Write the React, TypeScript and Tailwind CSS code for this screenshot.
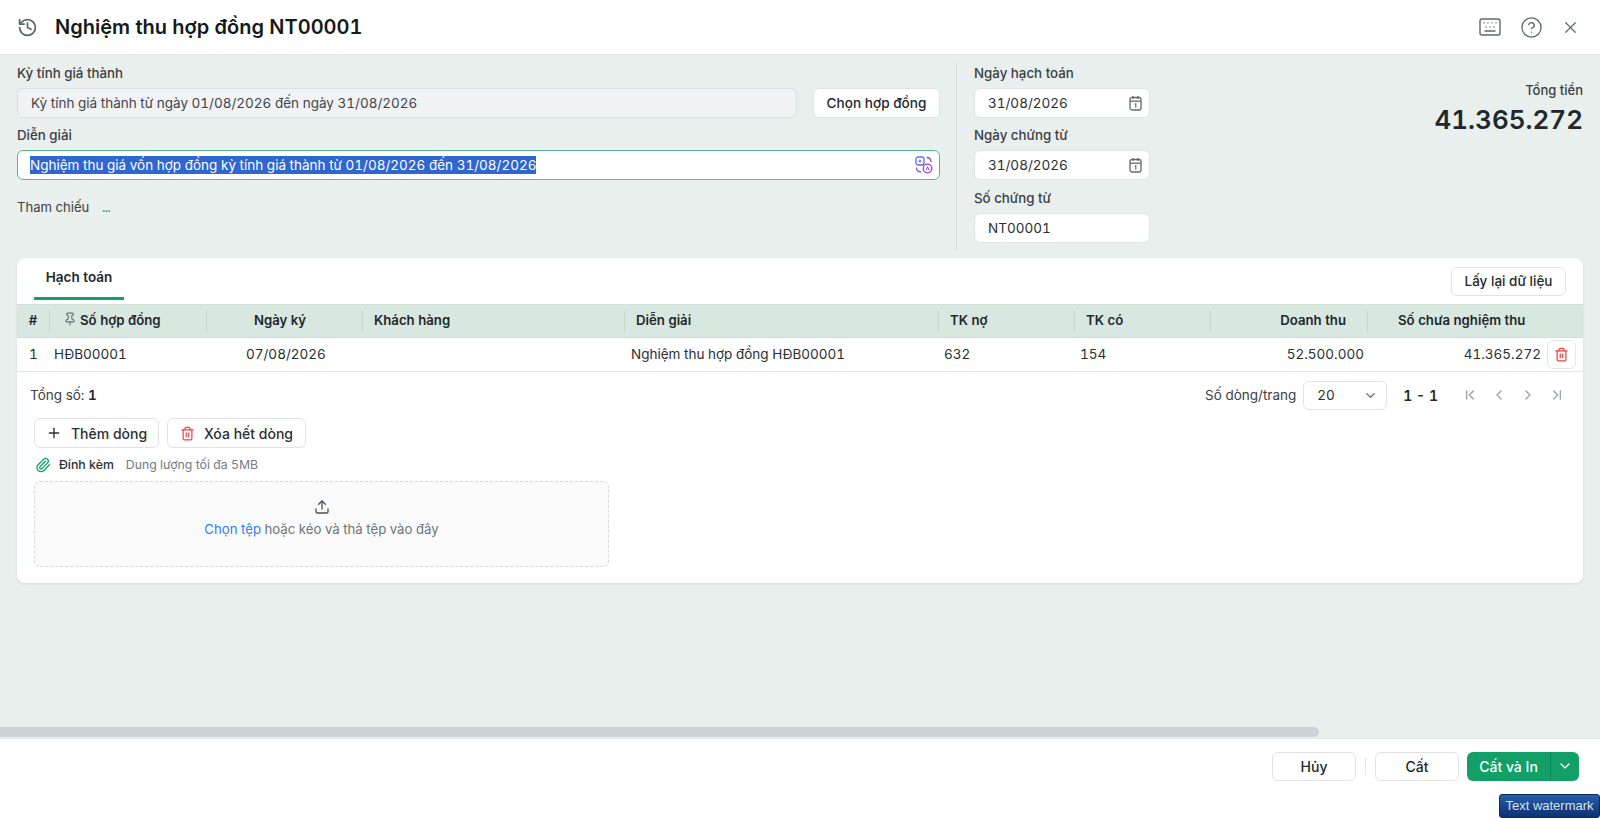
import {
  ChevronDown,
  ChevronFirst,
  ChevronLast,
  ChevronLeft,
  ChevronRight,
  CircleHelp,
  History,
  Keyboard,
  Paperclip,
  Pin,
  Plus,
  Trash2,
  Upload,
  X,
} from "lucide-react";

const font = { fontFamily: "Inter, 'Noto Sans', sans-serif" };

const CalendarIcon = () => (
  <svg width="15" height="16" viewBox="0 0 15 16" fill="none" className="text-[#5f6b73]">
    <rect x="2" y="2.5" width="11" height="12.5" rx="2" stroke="currentColor" strokeWidth="1.3" />
    <path d="M2 6.2h11" stroke="currentColor" strokeWidth="1.3" />
    <path d="M5 1v3M10 1v3" stroke="currentColor" strokeWidth="1.3" />
    <path d="M6.8 9.3l1-.6v4" stroke="currentColor" strokeWidth="1.1" />
  </svg>
);

const DateField = ({ value }: { value: string }) => (
  <div className="flex h-[30px] w-[176px] items-center justify-between rounded-md border border-[#dfe3e6] bg-white pl-[13px] pr-[6px] text-[13.5px] text-[#2a2f33]">
    <span>{value}</span>
    <CalendarIcon />
  </div>
);

const Label = ({ text }: { text: string }) => (
  <div className="flex h-[18px] items-center text-[13.3px] font-medium text-[#3a4045]">{text}</div>
);

const TranslateIcon = () => (
  <svg width="18" height="18" viewBox="0 0 18 18" fill="none">
    <defs>
      <linearGradient id="tg" x1="0" y1="0" x2="18" y2="18" gradientUnits="userSpaceOnUse">
        <stop offset="0" stopColor="#3b82f6" />
        <stop offset="1" stopColor="#c026d3" />
      </linearGradient>
    </defs>
    <rect x="1" y="1" width="8" height="8" rx="2" stroke="url(#tg)" strokeWidth="1.3" />
    <path d="M3.5 5h3M5 3.5v3" stroke="url(#tg)" strokeWidth="1.1" />
    <circle cx="12.5" cy="12.5" r="4.3" stroke="url(#tg)" strokeWidth="1.3" />
    <path d="M11 14.3l1.5-3.6 1.5 3.6" stroke="url(#tg)" strokeWidth="1" />
    <path d="M11.5 1.5c2.5 0 4.5 1.5 4.5 4.5M1.5 11.5c0 2.5 1.5 4.5 4.5 4.5" stroke="url(#tg)" strokeWidth="1.3" />
  </svg>
);

const headCell = "flex h-[22px] items-center border-r border-[#c9d6d0] text-[13.2px] font-semibold text-[#23282c]";
const gridCols = "grid grid-cols-[33px_157px_156px_262px_314px_136px_136px_157px_216px]";

export default function App() {
  return (
    <div className="flex h-[818px] w-[1600px] flex-col overflow-hidden bg-white tabular-nums" style={font}>
      <div className="flex h-[794px] flex-col overflow-hidden rounded-lg bg-white">
        <header className="flex h-[55px] shrink-0 items-center justify-between border-b border-[#e4e8e8] pl-[17px] pr-[20px]">
          <div className="flex items-center gap-[17px]">
            <History size={21} className="text-[#5d666c]" />
            <h1 className="text-[20px] font-semibold text-[#16191c]">Nghiệm thu hợp đồng NT00001</h1>
          </div>
          <div className="flex items-center gap-[18px] text-[#60696f]">
            <Keyboard size={24} strokeWidth={1.4} />
            <CircleHelp size={23} strokeWidth={1.4} />
            <X size={19} strokeWidth={1.5} />
          </div>
        </header>

        <main className="flex min-h-0 flex-1 flex-col bg-[#e9efed]">
          <section className="flex pl-[17px] pr-[17px] pt-[8px]">
            <div className="w-[923px] pt-[2px]">
              <Label text="Kỳ tính giá thành" />
              <div className="mt-[5px] flex gap-[16px]">
                <div className="flex h-[30px] w-[780px] items-center rounded-md border border-[#dcdfe2] bg-[#f1f2f4] px-[13px] text-[13.5px] text-[#3f464b]">
                  Kỳ tính giá thành từ ngày 01/08/2026 đến ngày 31/08/2026
                </div>
                <button className="h-[30px] w-[127px] rounded-md border border-[#dfe3e6] bg-white text-[13.6px] font-medium text-[#23282c]">
                  Chọn hợp đồng
                </button>
              </div>
              <div className="mt-[9px]">
                <Label text="Diễn giải" />
              </div>
              <div className="mt-[5px] flex h-[30px] items-center justify-between rounded-md border border-[#5cb592] bg-white pl-[12px] pr-[6px] text-[13.5px]">
                <span className="bg-[#2f66d0] leading-[18px] text-white">
                  Nghiệm thu giá vốn hợp đồng kỳ tính giá thành từ 01/08/2026 đến 31/08/2026
                </span>
                <TranslateIcon />
              </div>
              <div className="mt-[18px] flex items-center gap-[13px] text-[13.1px] text-[#3a4045]">
                <span>Tham chiếu</span>
                <span className="text-[10px] font-bold leading-none text-[#12a066]">...</span>
              </div>
            </div>

            <div className="ml-[16px] h-[187px] w-px bg-[#d5dbd9]" />

            <div className="ml-[17px] w-[176px] pt-[2px]">
              <Label text="Ngày hạch toán" />
              <div className="mt-[5px]">
                <DateField value="31/08/2026" />
              </div>
              <div className="mt-[9px]">
                <Label text="Ngày chứng từ" />
              </div>
              <div className="mt-[5px]">
                <DateField value="31/08/2026" />
              </div>
              <div className="mt-[10px]">
                <Label text="Số chứng từ" />
              </div>
              <div className="mt-[5px] flex h-[30px] items-center rounded-md border border-[#dfe3e6] bg-white pl-[13px] text-[13.5px] text-[#2a2f33]">
                NT00001
              </div>
            </div>

            <div className="flex-1 pt-[18px] text-right">
              <div className="text-[13px] font-medium text-[#3a4045]">Tổng tiền</div>
              <div className="mt-[3px] text-[26px] font-semibold leading-[32px] text-[#22272b]">41.365.272</div>
            </div>
          </section>

          <section className="mx-[17px] mt-[8px] h-[325px] overflow-hidden rounded-lg bg-white shadow-[0_1px_3px_rgba(0,0,0,0.08)]">
            <div className="flex h-[46px] items-start justify-between pl-[17px] pr-[17px]">
              <div className="flex h-[42px] w-[90px] items-center justify-center border-b-[3px] border-[#12a066] text-[13.5px] font-semibold text-[#23282c]">
                Hạch toán
              </div>
              <button className="mt-[9px] h-[29px] w-[115px] rounded-md border border-[#dfe3e6] bg-white text-[13.5px] font-medium text-[#23282c]">
                Lấy lại dữ liệu
              </button>
            </div>

            <div className={`${gridCols} h-[34px] items-center border-y border-[#d2dfd9] bg-[#d9e7e1]`}>
              <div className={`${headCell} justify-center`}>#</div>
              <div className={`${headCell} pl-[13px]`}>
                <Pin size={14} className="mr-[3px] -translate-y-[2px] text-[#6b7378]" />
                Số hợp đồng
              </div>
              <div className={`${headCell} justify-center pr-[9px]`}>Ngày ký</div>
              <div className={`${headCell} pl-[11px]`}>Khách hàng</div>
              <div className={`${headCell} pl-[11px]`}>Diễn giải</div>
              <div className={`${headCell} pl-[11px]`}>TK nợ</div>
              <div className={`${headCell} pl-[11px]`}>TK có</div>
              <div className={`${headCell} justify-end pr-[21px]`}>Doanh thu</div>
              <div className="flex h-[22px] items-center pl-[30px] text-[13.2px] font-semibold text-[#23282c]">Số chưa nghiệm thu</div>
            </div>

            <div className={`${gridCols} h-[34px] items-center border-b border-[#e2e6e8] text-[13.5px] text-[#2a2f33]`}>
              <div className="text-center">1</div>
              <div className="pl-[4px]">HĐB00001</div>
              <div className="pl-[39px]">07/08/2026</div>
              <div />
              <div className="pl-[6px]">Nghiệm thu hợp đồng HĐB00001</div>
              <div className="pl-[5px]">632</div>
              <div className="pl-[5px]">154</div>
              <div className="pr-[4px] text-right">52.500.000</div>
              <div className="flex items-center justify-end gap-[6px] pr-[8px]">
                <span>41.365.272</span>
                <button className="flex h-[29px] w-[29px] items-center justify-center rounded-md border border-[#e4e7e9] bg-white">
                  <Trash2 size={15} className="text-[#ef4444]" />
                </button>
              </div>
            </div>

            <div className="flex h-[46px] items-center justify-between pl-[13px] pr-[18px] text-[13.5px] text-[#3a4045]">
              <div>
                Tổng số: <span className="font-semibold text-[#23282c]">1</span>
              </div>
              <div className="flex items-center">
                <span>Số dòng/trang</span>
                <div className="ml-[7px] flex h-[29px] w-[84px] items-center justify-between rounded-md border border-[#dfe3e6] pl-[13px] pr-[8px] text-[#2a2f33]">
                  20
                  <ChevronDown size={15} className="text-[#5f6b73]" />
                </div>
                <span className="ml-[16px] text-[14px] font-semibold text-[#23282c]">1 - 1</span>
                <div className="ml-[24px] flex gap-[13px] text-[#9aa3a9]">
                  <ChevronFirst size={16} />
                  <ChevronLeft size={16} />
                  <ChevronRight size={16} />
                  <ChevronLast size={16} />
                </div>
              </div>
            </div>

            <div className="ml-[17px] flex gap-[8px] text-[14px] font-medium text-[#2a2f33]">
              <button className="flex h-[30px] w-[125px] items-center justify-center gap-[9px] rounded-md border border-[#dfe3e6] bg-white">
                <Plus size={16} />
                Thêm dòng
              </button>
              <button className="flex h-[30px] w-[139px] items-center justify-center gap-[9px] rounded-md border border-[#dfe3e6] bg-white">
                <Trash2 size={15} className="text-[#ef4444]" />
                Xóa hết dòng
              </button>
            </div>

            <div className="ml-[18px] mt-[8px] flex h-[18px] items-center text-[12.3px]">
              <Paperclip size={16} className="text-[#12a066]" />
              <span className="ml-[8px] font-medium text-[#2a2f33]">Đính kèm</span>
              <span className="ml-[12px] text-[#737c82]">Dung lượng tối đa 5MB</span>
            </div>

            <div className="ml-[17px] mt-[7px] flex h-[86px] w-[575px] flex-col items-center justify-center rounded-md border border-dashed border-[#d5d9dc] bg-[#fafafa] pb-[9px] text-[13.2px] text-[#6c757b]">
              <Upload size={16} className="text-[#4a5257]" />
              <div className="mt-[5px]">
                <span className="text-[#2f80ed]">Chọn tệp</span> hoặc kéo và thả tệp vào đây
              </div>
            </div>
          </section>

          <div className="mb-[1px] mt-auto h-[10px] w-[1319px] rounded-r-full bg-[#ced3d7]" />
        </main>

        <footer className="flex h-[56px] shrink-0 items-center justify-end border-t border-[#e2e6e8] pb-[1px] pr-[21px] text-[14px] font-medium">
          <button className="h-[29px] w-[84px] rounded-md border border-[#dfe3e6] bg-white text-[#23282c]">Hủy</button>
          <div className="mx-[9px] h-[17px] w-px bg-[#e2e6e8]" />
          <button className="h-[29px] w-[84px] rounded-md border border-[#dfe3e6] bg-white text-[#23282c]">Cất</button>
          <div className="ml-[8px] flex h-[29px] w-[112px] overflow-hidden rounded-md bg-[#12a066] text-white">
            <div className="flex w-[83px] items-center justify-center">Cất và In</div>
            <div className="flex flex-1 items-center justify-center border-l border-[#0d8a57]">
              <ChevronDown size={16} />
            </div>
          </div>
        </footer>
      </div>

      <div className="flex h-[24px] justify-end">
        <div
          className="flex h-[24px] w-[101px] items-center justify-center rounded-[3px] border border-[#0a2a5c] bg-gradient-to-b from-[#2a5ca8] to-[#0c3272] text-[13px] text-[#d8e2ee]"
          style={{ fontFamily: "'Liberation Sans', sans-serif" }}
        >
          Text watermark
        </div>
      </div>
    </div>
  );
}
